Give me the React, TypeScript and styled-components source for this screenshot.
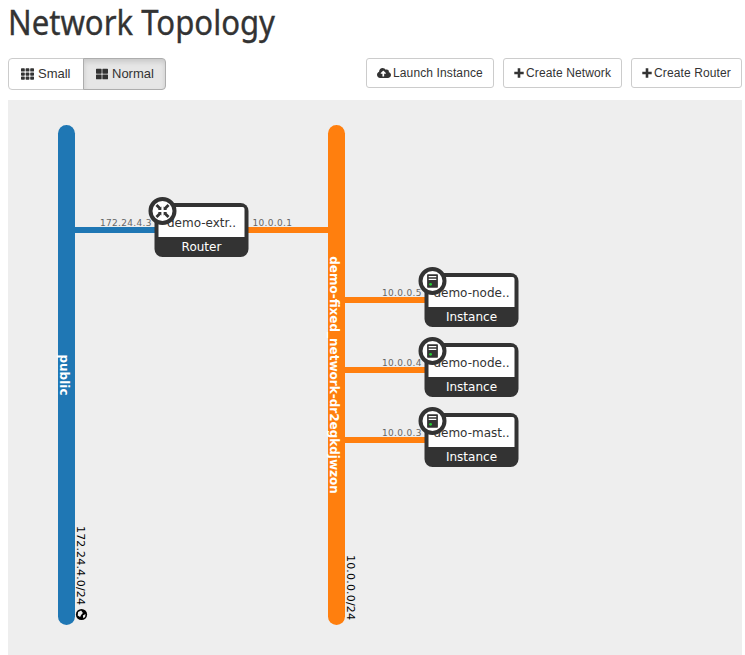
import React from 'react';
import styled, { createGlobalStyle } from 'styled-components';
import { FaCloudUploadAlt, FaTh, FaThLarge } from 'react-icons/fa';

const GlobalStyle = createGlobalStyle`
  * { box-sizing: border-box; }
  body { margin: 0; background: #fff; color: #333; font-family: "Liberation Sans", Arial, sans-serif; }
`;

const Page = styled.main`
  width: 745px;
  height: 655px;
  padding: 0 3px 0 8px;
  overflow: hidden;
  display: flex;
  flex-direction: column;
`;

const Title = styled.h1`
  margin: 0;
  height: 58px;
  font: 400 34px/45px "Noto Sans", sans-serif;
  white-space: nowrap;
  transform: scaleX(0.915);
  transform-origin: left top;
  -webkit-text-stroke: 0.35px #333;
`;

const Toolbar = styled.div`
  display: flex;
  justify-content: space-between;
  height: 42px;
`;

const SizeGroup = styled.div`
  display: flex;
  height: 32px;
`;

const SizeButton = styled.button<{ $active?: boolean }>`
  display: flex;
  align-items: center;
  gap: 4px;
  height: 32px;
  width: ${p => (p.$active ? 83 : 76)}px;
  margin-left: ${p => (p.$active ? -1 : 0)}px;
  padding: 0 0 0 12px;
  border: 1px solid ${p => (p.$active ? '#adadad' : '#ccc')};
  border-radius: ${p => (p.$active ? '0 4px 4px 0' : '4px 0 0 4px')};
  background: ${p => (p.$active ? '#e6e6e6' : '#fff')};
  box-shadow: ${p => (p.$active ? 'inset 0 3px 5px rgba(0, 0, 0, 0.125)' : 'none')};
  color: #333;
  font: 13px/18px "Liberation Sans", Arial, sans-serif;
  white-space: nowrap;
  svg { width: ${p => (p.$active ? 12 : 13)}px; height: 14px; flex: none; }
`;

const Actions = styled.div`
  display: flex;
  gap: 9px;
`;

const ActionButton = styled.button<{ $width: number }>`
  display: flex;
  align-items: center;
  gap: 2px;
  width: ${p => p.$width}px;
  height: 30px;
  padding: 0 0 0 10px;
  border: 1px solid #ccc;
  border-radius: 3px;
  background: #fff;
  color: #333;
  font: 12px/18px "Liberation Sans", Arial, sans-serif;
  letter-spacing: 0.12px;
  white-space: nowrap;
  svg { flex: none; }
`;

const Canvas = styled.svg`
  display: block;
  width: 734px;
  height: 555px;
  background: #eee;
  font-family: "DejaVu Sans", sans-serif;
`;

const NetworkName = styled.text`
  fill: #fff;
  font-size: 12px;
  font-weight: bold;
  text-anchor: middle;
`;

const Cidr = styled.text`
  fill: #000;
  font-size: 11px;
  text-anchor: end;
`;

const Address = styled.text<{ $end?: boolean }>`
  fill: #666;
  font-size: 9px;
  text-anchor: ${p => (p.$end ? 'end' : 'start')};
`;

const NodeName = styled.text`
  fill: #333;
  font-size: 12px;
  text-anchor: middle;
`;

const NodeType = styled(NodeName)`
  fill: #fff;
`;

const BLUE = '#1f77b4';
const ORANGE = '#ff7f0e';

function PlusIcon() {
  return (
    <svg width="10" height="10" viewBox="0 0 10 10">
      <path d="M5 .3V9.7M.3 5H9.7" stroke="#333" strokeWidth="2.6" />
    </svg>
  );
}

interface NetworkProps {
  x: number;
  color: string;
  name: string;
  cidr: string;
  cidrEnd: number;
  cidrLength: number;
}

function Network({ x, color, name, cidr, cidrEnd, cidrLength }: NetworkProps) {
  return (
    <g transform={`translate(${x} 25)`}>
      <rect width="17" height="500" rx="8.5" fill={color} />
      <NetworkName transform="translate(2 250) rotate(90)">{name}</NetworkName>
      <Cidr textLength={cidrLength} transform={`translate(19 ${cidrEnd}) rotate(90)`}>{cidr}</Cidr>
    </g>
  );
}

function RouterIcon() {
  return (
    <g fill="#333">
      {[0, 90, 180, 270].map(a => (
        <g key={a} transform={`rotate(${a})`}>
          <path d="M-6 -6L-2.5 -2.5" stroke="#333" strokeWidth="2.8" />
          <path d="M-1.1 -1.1V-4.6L-4.6 -1.1Z" />
        </g>
      ))}
    </g>
  );
}

function ServerIcon() {
  return (
    <g>
      <rect x="-5.4" y="-6.7" width="10.8" height="13.4" rx=".6" fill="#333" />
      <path d="M-3.8 -4.4H3.8M-3.8 -1.6H3.8" stroke="#fff" strokeWidth="1.3" />
      <circle cx="-1.9" cy="3.3" r="1.4" fill="#2c3" />
    </g>
  );
}

function Device({ x, y, name, router }: { x: number; y: number; name: string; router?: boolean }) {
  return (
    <g transform={`translate(${x} ${y})`}>
      <rect width="94" height="54" rx="8" fill="#333" />
      <path d="M4 34V6Q4 4 6 4H88Q90 4 90 6V34Z" fill="#fff" />
      <NodeName x="47" y="24">{name}</NodeName>
      <NodeType x="47" y="48">{router ? 'Router' : 'Instance'}</NodeType>
      <g transform="translate(8 8)">
        <circle r="12" fill="#fff" stroke="#333" strokeWidth="4" />
        {router ? <RouterIcon /> : <ServerIcon />}
      </g>
    </g>
  );
}

const instances = [
  { y: 173, ip: '10.0.0.5', name: 'demo-node..' },
  { y: 243, ip: '10.0.0.4', name: 'demo-node..' },
  { y: 313, ip: '10.0.0.3', name: 'demo-mast..' },
];

export default function App() {
  return (
    <Page>
      <GlobalStyle />
      <Title>Network Topology</Title>
      <Toolbar>
        <SizeGroup>
          <SizeButton><FaTh />Small</SizeButton>
          <SizeButton $active><FaThLarge />Normal</SizeButton>
        </SizeGroup>
        <Actions>
          <ActionButton $width={128}><FaCloudUploadAlt size={14} />Launch Instance</ActionButton>
          <ActionButton $width={119}><PlusIcon />Create Network</ActionButton>
          <ActionButton $width={111}><PlusIcon />Create Router</ActionButton>
        </Actions>
      </Toolbar>
      <Canvas viewBox="0 0 734 555">
        <path d="M66 130H150" stroke={BLUE} strokeWidth="6" />
        <path d="M236 130H325" stroke={ORANGE} strokeWidth="6" />
        {instances.map(i => <path key={i.y} d={`M330 ${i.y + 27}H420`} stroke={ORANGE} strokeWidth="6" />)}
        <Network x={50} color={BLUE} name="public" cidr="172.24.4.0/24" cidrEnd={480} cidrLength={79} />
        <Network x={320} color={ORANGE} name="demo-fixed_network-dr2egkdjwzon" cidr="10.0.0.0/24" cidrEnd={495} cidrLength={65} />
        <g transform="translate(73.5 514.5)">
          <circle r="5.6" fill="#000" />
          <path d="M-3.8 1L-3.4 -2.4L-.4 -4L1.4 -1.4L-.4 .4L-1.4 2.4ZM1.4 1L4 -.4L3.6 2.4L1.8 3.8Z" fill="#eee" />
        </g>
        <Address $end x="143.5" y="126" textLength="51.5">172.24.4.3</Address>
        <Address x="244.5" y="126" textLength="39.5">10.0.0.1</Address>
        <Device x={146.5} y={103} name="demo-extr.." router />
        {instances.map(i => (
          <g key={i.y}>
            <Address $end x="413.5" y={i.y + 23} textLength="39.5">{i.ip}</Address>
            <Device x={416.5} y={i.y} name={i.name} />
          </g>
        ))}
      </Canvas>
    </Page>
  );
}
